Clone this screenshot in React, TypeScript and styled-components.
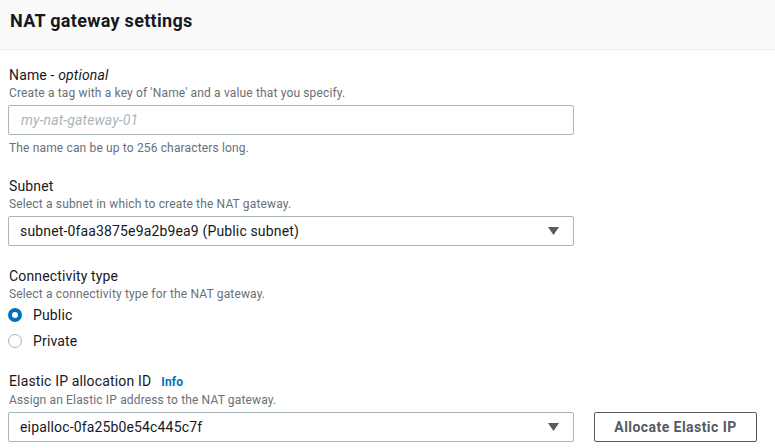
import React from "react";
import styled, { createGlobalStyle } from "styled-components";

const Global = createGlobalStyle`
  html, body { margin: 0; padding: 0; background: #ffffff; }
  body { font-family: Roboto, "Noto Sans", Arial, sans-serif; color: #16191f; letter-spacing: 0.15px; }
  * { box-sizing: border-box; }
`;

const Panel = styled.div`
  width: 775px;
  height: 448px;
  overflow: hidden;
  background: #fff;
`;

const Header = styled.div`
  height: 50px;
  background: #fafafa;
  border-bottom: 1px solid #eaeded;
  padding: 10px 10px 0;
`;

const Title = styled.h2`
  margin: 0;
  font-size: 18px;
  line-height: 22px;
  font-weight: 700;
  letter-spacing: 0.3px;
  color: #16191f;
`;

const Body = styled.div`
  padding: 15px 8px 0;
  display: flex;
  flex-direction: column;
  gap: 20px;
`;

const Field = styled.div`
  display: flex;
  flex-direction: column;
`;

const Label = styled.div`
  font-size: 14px;
  line-height: 20px;
  padding-left: 1px;
  color: #16191f;
  display: flex;
  align-items: baseline;
  gap: 10px;
  em { font-style: italic; }
`;

const InfoLink = styled.a`
  font-size: 12px;
  font-weight: 700;
  color: #0073bb;
  text-decoration: none;
`;

const Desc = styled.div<{ $top?: number }>`
  font-size: 12px;
  line-height: 16px;
  padding-left: 1px;
  color: #687078;
  margin-top: ${(p) => p.$top ?? 0}px;
`;

const Input = styled.input`
  margin-top: 4px;
  width: 566px;
  height: 30px;
  border: 1px solid #aab7b8;
  border-radius: 2px;
  padding: 0 12px;
  font-family: inherit;
  font-size: 14px;
  letter-spacing: 0.15px;
  color: #16191f;
  outline: none;
  &::placeholder { color: #aab7b8; font-style: italic; }
`;

const Row = styled.div`
  margin-top: 4px;
  display: flex;
  align-items: center;
  gap: 20px;
`;

const Select = styled.div<{ $noTop?: boolean }>`
  margin-top: ${(p) => (p.$noTop ? 0 : 4)}px;
  width: 566px;
  height: 30px;
  border: 1px solid #aab7b8;
  border-radius: 2px;
  padding: 0 14px 0 11px;
  display: flex;
  align-items: center;
  justify-content: space-between;
  font-size: 14px;
  color: #16191f;
`;

const Caret = () => (
  <svg width="11" height="8" viewBox="0 0 11 8">
    <path d="M0 0 H11 L5.5 8 Z" fill="#545b64" />
  </svg>
);

const RadioGroup = styled.div`
  margin-top: 3px;
  display: flex;
  flex-direction: column;
  gap: 6px;
`;

const RadioRow = styled.label`
  display: flex;
  align-items: center;
  gap: 11px;
  font-size: 14px;
  line-height: 20px;
  color: #16191f;
`;

const RadioDot = styled.span<{ $on?: boolean }>`
  width: 14px;
  height: 14px;
  border-radius: 50%;
  background: #fff;
  border: ${(p) => (p.$on ? "4.5px solid #0073bb" : "1.5px solid #aab7b8")};
`;

const Button = styled.button`
  width: 163px;
  height: 30px;
  border: 1px solid #545b64;
  border-radius: 2px;
  background: #fff;
  color: #545b64;
  font-family: inherit;
  font-size: 14px;
  font-weight: 700;
  letter-spacing: 0.45px;
  padding: 0;
`;

export default function App() {
  return (
    <Panel>
      <Global />
      <Header>
        <Title>NAT gateway settings</Title>
      </Header>
      <Body>
        <Field>
          <Label>
            <span>
              Name - <em>optional</em>
            </span>
          </Label>
          <Desc>Create a tag with a key of 'Name' and a value that you specify.</Desc>
          <Input placeholder="my-nat-gateway-01" />
          <Desc $top={5}>The name can be up to 256 characters long.</Desc>
        </Field>
        <Field>
          <Label>Subnet</Label>
          <Desc>Select a subnet in which to create the NAT gateway.</Desc>
          <Select>
            <span>subnet-0faa3875e9a2b9ea9 (Public subnet)</span>
            <Caret />
          </Select>
        </Field>
        <Field>
          <Label>Connectivity type</Label>
          <Desc>Select a connectivity type for the NAT gateway.</Desc>
          <RadioGroup>
            <RadioRow>
              <RadioDot $on />
              Public
            </RadioRow>
            <RadioRow>
              <RadioDot />
              Private
            </RadioRow>
          </RadioGroup>
        </Field>
        <Field>
          <Label>
            <span>Elastic IP allocation ID</span>
            <InfoLink href="#">Info</InfoLink>
          </Label>
          <Desc>Assign an Elastic IP address to the NAT gateway.</Desc>
          <Row>
            <Select $noTop>
              <span>eipalloc-0fa25b0e54c445c7f</span>
              <Caret />
            </Select>
            <Button>Allocate Elastic IP</Button>
          </Row>
        </Field>
      </Body>
    </Panel>
  );
}
